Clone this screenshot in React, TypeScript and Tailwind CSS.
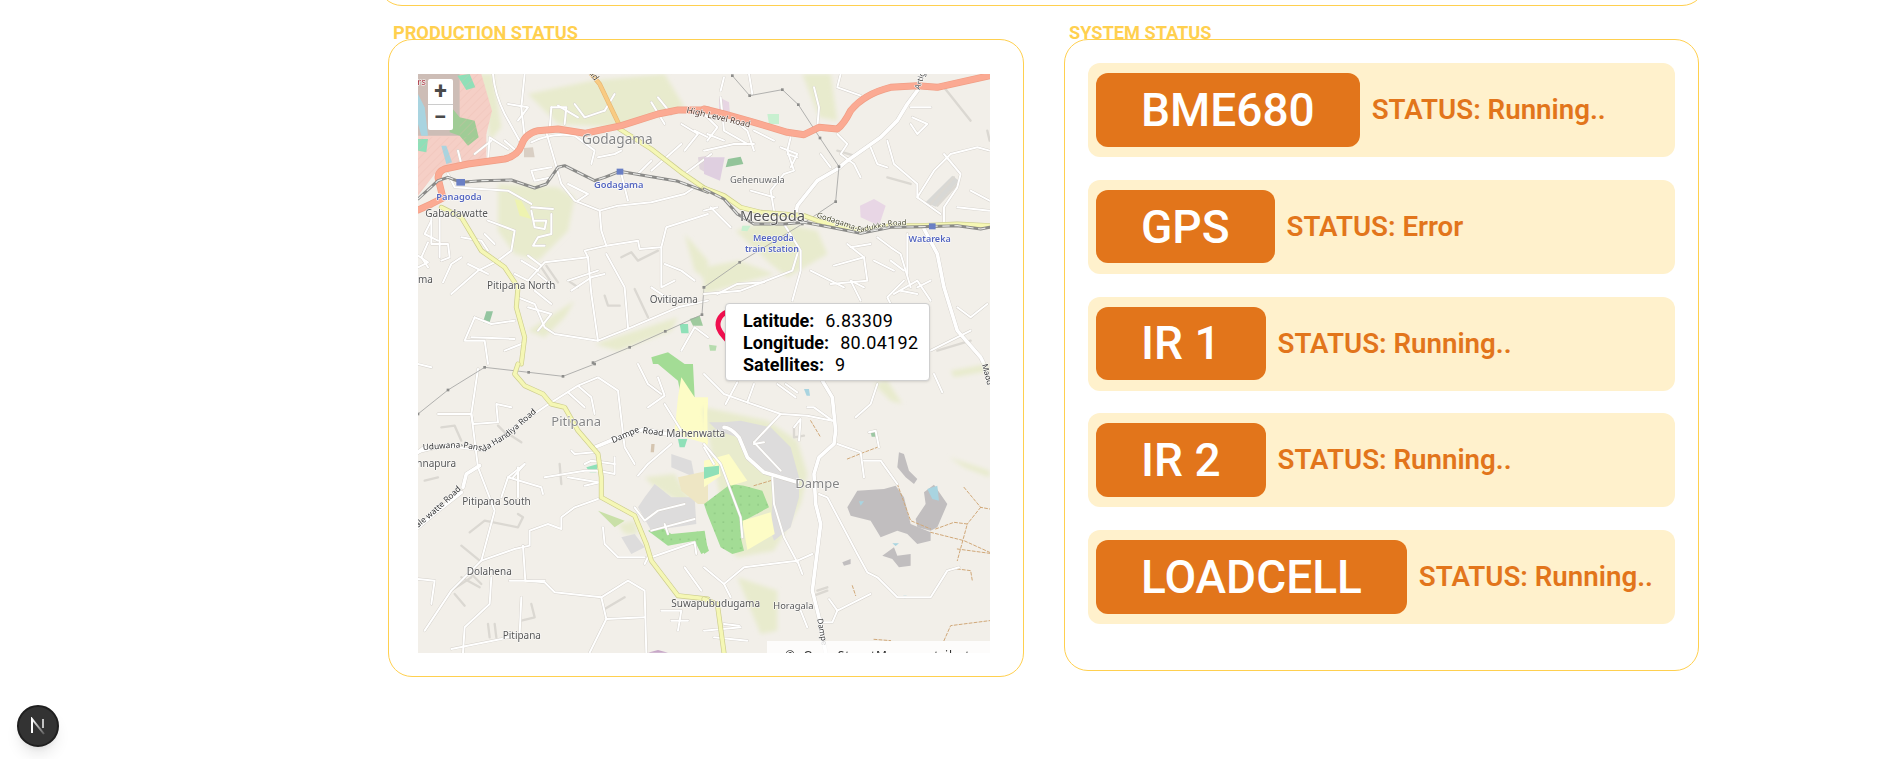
const Y = ["M70,400 L130,430 L190,530 L260,580 L300,640 L295,700 L320,790 L310,870","M605,165 L700,225 L790,295 L870,350"];

type Q = {
  t: string;
  areas: [string, string][];
  minor: string[];
  major?: string[];
  yellow?: string[];
  salmon?: string[];
  orange?: string[];
  rail?: string[];
  power?: string[];
  paths?: string[];
  tracks?: string[];
};

const PALE = "#e8ebcd";
const GREEN = "#a3dc95";
const CREAM = "#fdfcc6";
const GREY = "#dddcdc";
const ROCK = "#c1bebf";
const TEAL = "#8fe0b8";
const WATER = "#a9d4e0";

const quads: Q[] = [
  {
    t: "scale(0.3333)",
    areas: [
      [PALE, "M160,0 L225,0 L250,160 L215,200 L205,110Z"],
      [PALE, "M330,60 L520,20 L740,0 L800,100 L600,160 L420,150Z"],
      [PALE, "M240,330 L420,340 L470,370 L450,470 L360,560 L290,540 L240,470Z"],
      [PALE, "M530,810 L780,730 L760,770 L600,830Z"],
      [PALE, "M330,770 L470,680 L440,730 L380,790Z"],
      [PALE, "M800,480 L870,560 L870,620 L830,590Z"],
      ["#f5cfc6", "M0,0 L190,0 L222,110 L205,180 L205,270 L95,275 L70,280 L50,300 L0,365Z"],
      ["#cdbdb6", "M0,0 L125,0 L125,185 L0,185Z"],
      ["#a0cc96", "M100,100 L125,130 L170,140 L182,190 L150,215 L125,185 L95,175Z"],
      [TEAL, "M118,5 L155,0 L172,40 L145,48Z"],
      [WATER, "M0,60 L20,100 L30,185 L10,185 L0,150Z"],
      [TEAL, "M0,195 L30,195 L25,235 L0,230Z"],
      [WATER, "M70,215 L85,215 L102,265 L85,270Z"],
      ["#d9cfc4", "M318,222 L345,220 L350,250 L318,250Z"],
      ["#94c5a0", "M205,712 L225,712 L215,745 L195,745Z"],
      [TEAL, "M785,750 L810,750 L812,778 L790,778Z"],
      ["#9fca9e", "M815,735 L845,725 L855,755 L825,755Z"],
      [GREEN, "M700,850 L750,835 L800,870 L705,870Z"],
      ["#eef3b0", "M290,375 L310,380 L340,435 L305,425Z"],
      ["#e0d4dc", "M840,250 L870,245 L870,300 L845,285Z"],
    ],
    salmon: ["M0,408 L40,390 L75,372 L62,320 Q55,295 80,285 L150,270 L260,255 Q300,245 310,215 Q320,180 360,170 L420,165 L500,178 L610,155 L720,120 L780,108 L870,108"],
    orange: ["M520,0 L545,30 L605,155"],
    yellow: Y,
    rail: ["M0,375 L60,320 L90,310 L130,325 L190,320 L280,318 L350,342 L385,330 L420,280 L440,275 L530,320 L560,310 L605,292 L700,308 L780,322 L870,355"],
    power: ["M525,866 L635,820 L742,772 L852,722 L858,640"],
    minor: [
      "M225,0 Q230,60 260,120 L310,210","M320,0 L310,100 L320,190","M340,205 Q400,175 470,185 L530,230 L520,270",
      "M385,175 L410,260 L430,330 L470,380 L545,410 L600,395 L700,385 L800,360 L830,340",
      "M545,410 L550,470 L565,515 L660,500 L665,525 L730,520 L745,460 L870,420",
      "M565,515 L500,530 L510,550 L380,565 L330,620 L290,600","M510,550 L520,660 L540,800","M565,540 L620,640 L630,760",
      "M730,520 L730,640 L770,620","M740,570 L790,590 L830,620","M270,225 L215,190 L210,260","M260,200 L300,235",
      "M40,430 L40,510 L90,510 L95,550 L70,560","M65,430 L65,550","M30,505 L10,550 L30,580","M130,550 L100,570 L75,625",
      "M210,440 L290,470 L280,530 L240,560 L180,590 L100,660","M340,400 L405,405","M340,410 L350,460 L380,465 L385,440 L350,440",
      "M400,420 L400,480 L360,490 L345,515 L380,515","M300,670 L350,690 L380,760 L410,780 L540,800 L640,760 L780,700 L870,680",
      "M170,730 L140,800 L200,800 L210,870","M160,790 L290,795","M260,830 L310,810","M450,620 L540,590","M700,290 L790,210",
      "M610,230 L590,240 L540,250","M630,380 L610,300","M400,100 L445,100 L440,150","M720,70 L760,120","M220,200 L170,240",
      "M310,560 L360,590","M330,545 L370,575","M400,280 L340,290 L350,320 L400,310","M450,330 L510,360 L480,380","M90,300 L110,340 L270,350 L340,390",
      "M120,230 L130,270","M700,85 L740,150","M880,240 L800,300","M830,170 L870,190","M560,110 L500,130 L470,90",
      "M270,90 L330,100 L300,140","M400,100 L395,165","M420,95 L480,130","M590,60 L560,110","M790,150 L840,180 L800,230","M700,260 L660,300",
      "M40,440 L20,480 L60,500","M0,545 L30,565 L0,580","M130,490 L190,500 L210,530","M200,480 L230,510","M150,570 L210,600","M290,740 L220,750 L170,730",
      "M330,700 L400,720 L360,770","M350,650 L400,690","M360,600 L410,640","M460,650 L520,610 L560,600","M790,830 L830,760 L870,790","M700,640 L760,680",
    ],
    tracks: ["M650,645 L690,730","M610,550 L640,535 L660,560 L720,530","M560,665 L570,695 L605,695","M450,620 L480,640","M370,580 L410,640","M385,575 L420,625"],
  },
  {
    t: "translate(286,0) scale(0.3333)",
    areas: [
      [PALE, "M295,0 L380,0 L400,140 L345,130Z"],
      [PALE, "M95,470 L200,440 L340,470 L370,540 L250,610 L200,570Z"],
      [PALE, "M0,580 L105,560 L210,600 L0,660Z"],
      ["#e7d5e3", "M45,70 L75,85 L78,120 L45,115Z"],
      ["#dfcfe0", "M0,250 L62,250 L48,320 L0,300Z"],
      ["#93c49a", "M72,255 L110,248 L118,270 L65,280Z"],
      ["#c8f0d0", "M190,120 L225,120 L225,150 L195,150Z"],
      ["#e8d6e5", "M468,395 L510,375 L545,395 L525,455 L470,430Z"],
      ["#c8f0d0", "M115,455 L140,455 L130,472 L112,470Z"],
      ["#d8d8d5", "M665,385 L745,305 L765,320 L695,398Z"],
      ["#b6dcae", "M15,812 L38,815 L35,830 L18,830Z"],
    ],
    salmon: ["M0,105 L60,120 L150,145 L250,175 L300,182 L345,160 L400,165 Q420,150 440,110 Q480,60 560,40 L640,35 L700,40 L857,5"],
    yellow: ["M0,342 L60,365 L110,400 L170,415 L300,425 L340,440 L470,470 L560,455 L650,455 L760,450 L857,455"],
    rail: ["M0,345 L60,375 L100,420 L150,450 L240,450 L300,445 L380,460 L470,478 L560,460 L650,458 L760,455 L830,465 L857,460"],
    power: ["M85,5 L137,65 L235,47 L283,92 L348,192 L405,278 L395,383 L295,450 L107,565 L0,640"],
    major: ["M640,50 L610,90 L580,140 L530,190 L430,260 L400,285 L340,320 L280,395 L275,420","M660,465 L700,540 L720,640 L760,770 L830,850 L840,870"],
    minor: [
      "M260,190 L250,230 L270,290 L240,300 L200,350 L210,410","M0,230 L90,210 L150,210","M50,70 L60,170 L130,210","M135,0 L145,60",
      "M10,180 L60,200","M410,0 L400,40 L470,65","M330,40 L345,100 L340,160","M240,450 L290,530 L290,590 L265,680",
      "M0,660 L110,650 L265,590 L280,540","M400,180 L430,210 L410,240 L450,270 L470,310","M550,200 L570,270 L640,330 L640,370 L710,420",
      "M640,370 L690,290 L740,240 L820,220 L857,230","M720,240 L770,300 L760,340 L720,400 L720,450","M430,510 L480,550 L390,575",
      "M480,550 L490,620 L380,630","M520,490 L560,520 L590,540 L620,640","M600,620 L550,670 L560,690","M680,830 L800,770","M320,590 L420,640",
      "M620,100 L680,100","M625,130 L670,150 L640,180 L620,150","M40,660 L100,630 L180,625","M0,410 L40,400","M140,350 L210,370",
      "M470,680 L440,620 L480,640","M570,660 L640,620 L680,680","M60,10 L50,50","M250,240 L280,250","M610,480 L610,600",
      "M0,120 L40,160 L10,200","M80,130 L130,170 L150,230","M150,170 L210,200","M230,220 L280,240 L260,280","M500,220 L520,270 L550,280","M350,240 L380,280",
      "M440,520 L500,510","M510,560 L570,590","M560,560 L600,590","M590,650 L640,660","M640,640 L680,620","M800,350 L857,380","M760,400 L857,410",
      "M20,400 L80,460","M850,690 L800,730 L760,700",
    ],
    tracks: ["M720,40 L800,140","M550,310 L620,330","M700,830 L800,800","M850,170 L857,200","M400,230 L450,245","M680,390 L750,310","M700,395 L765,325"],
  },
  {
    t: "translate(0,290) scale(0.3333)",
    areas: [
      [PALE, "M680,340 L770,330 L830,430 L760,400 L700,360Z"],
      [PALE, "M600,480 L650,470 L660,510 L620,510Z"],
      [GREY, "M610,520 L650,510 L680,550 L640,570Z"],
      [GREY, "M680,400 L710,360 L760,400 L830,400 L835,480 L700,500 L660,430Z"],
      [GREY, "M760,270 L820,290 L830,340 L760,310Z"],
      [GREEN, "M690,500 L730,490 L760,510 L860,500 L870,560 L850,570 L830,530 L750,545 L730,530Z"],
      [GREEN, "M720,0 L825,0 L830,100 L790,100 L780,50Z"],
      [CREAM, "M790,40 L830,100 L870,100 L870,240 L800,220 L770,200 L780,100Z"],
      ["#eee6c4", "M780,340 L870,320 L870,420 L840,420 L790,380Z"],
      [TEAL, "M505,310 L540,300 L535,325 L515,325Z"],
      ["#c9e0a8", "M540,440 L620,470 L590,490 L565,465Z"],
      [TEAL, "M780,225 L808,225 L800,250 L785,250Z"],
      ["#c7a7c8", "M690,866 L720,858 L750,866Z"],
      ["#d5c5b0", "M700,240 L710,240 L708,265 L698,265Z"],
    ],
    yellow: ["M300,0 L290,30 L320,65 L375,90 L400,120 L440,130 L480,200 L540,270 L550,340 L550,400 L650,455 L685,540 L700,590 L780,695 L870,705"],
    power: ["M0,150 L90,78 L200,10 L332,25 L435,37 L530,0"],
    major: ["M135,370 L145,330 L185,305","M0,490 L60,440 L130,385","M0,265 L20,250","M530,250 L590,225 L680,195 L770,215"],
    minor: [
      "M0,265 L80,245 L200,260 L290,190 L385,125 L480,65 L540,40 L600,80 L620,250 L650,300","M60,150 L160,150 L165,180 L240,175 L235,120 L280,130",
      "M160,150 L180,310 L230,440 L190,590 L100,680 L20,800","M180,15 L160,150","M380,340 L500,320 L540,320","M320,300 L270,340 L250,400",
      "M270,340 L370,370 L375,390","M300,310 L300,400","M540,405 L470,430 L430,460 L430,495 L390,480 L335,500 L335,545 L290,555 L190,590",
      "M315,545 L322,650 L380,655 L410,685 L550,700 L630,650 L680,680 L685,866","M275,650 L380,650","M220,640 L215,720 L140,790 L135,866",
      "M310,700 L305,810 L250,825 L100,855","M565,765 L680,760","M550,700 L565,765 L515,866","M555,490 L560,540 L600,580 L680,580",
      "M690,580 L680,600","M700,580 L830,535 L835,570","M720,40 L740,95 L690,130","M660,0 L690,60 L730,90","M760,240 L690,300 L660,335",
      "M460,260 L470,270 L530,265","M450,340 L540,355","M500,365 L545,355","M590,280 L590,330 L540,320","M650,430 L680,470 L720,440 L800,420","M700,500 L830,465",
      "M740,480 L750,510","M730,740 L790,740 L780,800","M760,770 L810,770","M800,610 L850,680","M0,645 L50,650 L40,720","M0,0 L40,10",
      "M480,65 L520,100 L530,150","M450,85 L500,130","M285,340 L320,300","M500,300 L520,290 L590,300","M740,120 L790,200",
    ],
    tracks: ["M70,190 L110,185 L130,230","M130,545 L185,590","M155,505 L200,470 L300,490 L315,460 L300,450","M425,300 L430,360","M100,680 L160,640","M110,690 L140,725","M340,720 L350,760 L310,770","M210,780 L215,820","M230,780 L235,820","M560,735 L620,700","M280,215 L310,235","M240,185 L270,215","M20,350 L60,340","M130,640 L185,670","M160,630 L190,660"],
  },
  {
    t: "translate(286,290) scale(0.3333)",
    areas: [
      [PALE, "M0,130 L190,170 L280,230 L310,330 L290,420 L210,560 L100,580 L80,560 L0,150Z"],
      [PALE, "M510,60 L550,50 L595,120 L560,110Z"],
      [PALE, "M735,280 L857,320 L857,340 L780,310Z"],
      [PALE, "M740,20 L850,0 L857,20 L750,40Z"],
      [PALE, "M100,640 L220,680 L220,800 L170,810Z"],
      [GREY, "M15,175 L60,175 L110,170 L200,190 L260,250 L285,340 L285,400 L260,490 L210,530 L200,500 L210,340 L130,290 L100,220 L40,200Z"],
      [GREEN, "M0,420 L80,360 L120,365 L175,380 L195,430 L120,470 L110,520 L120,560 L85,570 L50,550 L10,450Z"],
      [CREAM, "M40,280 L75,270 L130,350 L80,365 L60,330Z"],
      [CREAM, "M115,470 L200,445 L212,510 L130,558Z"],
      [CREAM, "M0,120 L10,120 L10,250 L0,250Z"],
      [CREAM, "M0,290 L40,280 L50,335 L0,370Z"],
      [TEAL, "M0,310 L45,305 L45,330 L0,345Z"],
      [GREEN, "M0,520 L15,560 L0,570Z"],
      [ROCK, "M430,430 L460,380 L540,375 L575,365 L600,400 L620,480 L680,505 L680,530 L640,540 L610,510 L580,500 L530,520 L500,470 L440,455Z"],
      [ROCK, "M635,465 L665,420 L660,385 L690,362 L730,420 L700,490 L680,500 L640,490Z"],
      [ROCK, "M585,265 L600,270 L615,320 L640,345 L630,360 L605,340 L580,310Z"],
      [ROCK, "M535,575 L570,550 L580,575 L620,570 L620,605 L585,610 L565,585Z"],
      [ROCK, "M415,595 L440,585 L440,600 L420,605Z"],
      [WATER, "M670,375 L700,365 L705,410 L685,405Z"],
      [WATER, "M465,412 L480,412 L470,425Z"],
      [WATER, "M565,538 L585,538 L575,546Z"],
      [WATER, "M300,75 L315,75 L318,95 L308,95Z"],
      [WATER, "M598,695 L608,695 L603,705Z"],
      ["#9cc7a3", "M500,205 L515,202 L515,218 L503,218Z"],
    ],
    yellow: ["M0,705 L40,720 L60,866"],
    major: ["M355,50 L385,100 L395,200 L390,240 L345,280 L330,330 L335,420 L350,480 L340,560 L325,680 L345,760 L365,866","M60,190 Q80,190 105,220 L130,280 L180,325 L280,355"],
    paths: ["M430,285 L480,265 L520,250","M580,360 L620,470 L680,495","M680,505 L780,530 L857,565","M695,495 L750,475 L790,480 L760,590","M780,370 L830,430 L857,435","M830,430 L790,480","M760,555 L857,568","M760,615 L800,620 L805,650","M720,830 L740,785 L857,770","M445,665 L455,695","M320,170 L350,220","M150,365 L200,350","M510,826 L560,830"],
    minor: [
      "M0,240 L50,300 L110,460 L115,520","M400,240 L470,265 L480,340","M480,290 L530,290 L580,360","M345,390 L370,400 L460,570 L490,625 L520,640 L580,700 L680,700 L730,620 L765,610",
      "M230,150 L150,235","M130,115 L230,150 L310,155 L385,170","M310,130 L330,130 L385,170","M205,340 L210,420 L240,520 L280,595","M325,570 L280,590 L120,610 L60,660 L80,700",
      "M0,610 L60,660","M280,590 L295,630","M375,705 L400,740 L500,690","M400,740 L385,775 L350,775","M290,740 L310,790","M0,30 L60,90 L130,115","M520,60 L500,120 L455,160",
      "M495,205 L515,200 L525,250","M270,190 L290,165 L285,230","M690,30 L715,85","M150,60 L130,115","M100,55 L65,120","M220,60 L275,100","M245,60 L280,85",
      "M0,800 L110,790","M30,820 L130,830","M60,780 L105,785","M150,235 L230,320","M0,250 L30,300","M150,240 L180,235",
    ],
    tracks: ["M270,190 L270,220 L300,215","M330,695 L370,680","M340,680 L370,670"],
  },
];

function MapArt() {
  return (
    <svg width="572" height="579" viewBox="0 0 572 579" className="block blur-[0.5px]">
      <rect width="572" height="579" fill="#f2efe9" />
      <defs>
        <pattern id="hatch" width="18" height="18" patternUnits="userSpaceOnUse" patternTransform="rotate(-45)">
          <line x1="0" y1="0" x2="18" y2="0" stroke="#e9b7ab" strokeWidth="1.5" />
        </pattern>
        <pattern id="trees" width="26" height="26" patternUnits="userSpaceOnUse">
          <circle cx="6" cy="6" r="1.8" fill="#6fa768" />
        </pattern>
        <filter id="soft" x="-20%" y="-20%" width="140%" height="140%">
          <feGaussianBlur stdDeviation="7" />
        </filter>
      </defs>
      {quads.map((q, i) => (
        <g key={i} transform={q.t} fill="none" strokeLinecap="round" strokeLinejoin="round">
          {q.areas.map(([c, d], j) => (
            <path key={j} d={d} fill={c} filter={c === PALE ? "url(#soft)" : undefined} />
          ))}
          {i === 0 && <path d="M125,185 L205,180 L222,110 L190,0 L125,0Z M0,190 L205,190 L205,270 L95,275 L50,300 L0,365Z" fill="url(#hatch)" />}
          {i === 3 && <path d="M0,420 L80,360 L120,365 L175,380 L195,430 L120,470 L110,520 L120,560 L85,570 L50,550 L10,450Z" fill="url(#trees)" />}
          {i === 2 && <path d="M690,500 L730,490 L760,510 L860,500 L870,560 L850,570 L830,530 L750,545 L730,530Z" fill="url(#trees)" />}
          {q.tracks?.map((d, j) => <path key={j} d={d} stroke="#dbd8d2" strokeWidth="7" />)}
          {q.paths?.map((d, j) => <path key={j} d={d} stroke="#d0a878" strokeWidth="3" strokeDasharray="9 6" />)}
          {q.minor.map((d, j) => <path key={j} d={d} stroke="#d4d0ca" strokeWidth="8.5" />)}
          {q.major?.map((d, j) => <path key={j} d={d} stroke="#cfcbc5" strokeWidth="13" />)}
          {q.minor.map((d, j) => <path key={j} d={d} stroke="#ffffff" strokeWidth="6" />)}
          {q.major?.map((d, j) => <path key={j} d={d} stroke="#ffffff" strokeWidth="11" />)}
          {q.power?.map((d, j) => (
            <g key={j}>
              <path d={d} stroke="#a4a4a2" strokeWidth="2.5" />
              {d.split(/[ML ]+/).filter(Boolean).map((p, k) => {
                const [x, y] = p.split(",");
                return <rect key={k} x={Number(x) - 4} y={Number(y) - 4} width="8" height="8" fill="#8d8d8b" />;
              })}
            </g>
          ))}
          {q.orange?.map((d, j) => <path key={j} d={d} stroke="#e9b771" strokeWidth="14" />)}
          {q.orange?.map((d, j) => <path key={j} d={d} stroke="#f8cb83" strokeWidth="10" />)}
          {q.yellow?.map((d, j) => <path key={j} d={d} stroke="#cdcd8e" strokeWidth="15" />)}
          {q.yellow?.map((d, j) => <path key={j} d={d} stroke="#f5f7b5" strokeWidth="11" />)}
          {q.salmon?.map((d, j) => <path key={j} d={d} stroke="#f09e85" strokeWidth="21" />)}
          {q.salmon?.map((d, j) => <path key={j} d={d} stroke="#fbaa93" strokeWidth="17" />)}
          {q.rail?.map((d, j) => <path key={j} d={d} stroke="#8a8a88" strokeWidth="9" />)}
          {q.rail?.map((d, j) => <path key={j} d={d} stroke="#e8e8e6" strokeWidth="3.5" strokeDasharray="22 14" strokeLinecap="butt" />)}
        </g>
      ))}
      <g transform="scale(0.3333)" fontFamily="'Noto Sans',sans-serif" stroke="#ffffff" strokeWidth="3" paintOrder="stroke" strokeLinejoin="round">
        <defs>
          <path id="p-gp" d="M1195,430 L1258,450 L1328,475 L1418,455 L1510,452" />
          <path id="p-ud" d="M15,1128 L130,1120 L200,1132 L270,1090 L385,990" />
          <path id="p-wa" d="M0,1362 L60,1312 L146,1232" />
          <path id="p-da" d="M585,1108 L660,1075 L745,1088" />
        </defs>
        <rect x="115" y="315" width="26" height="20" fill="#6a7fc4" stroke="none" />
        <rect x="596" y="284" width="20" height="18" fill="#6a7fc4" stroke="none" />
        <rect x="1533" y="448" width="20" height="18" fill="#6a7fc4" stroke="none" />
        <text x="-2" y="34" fontSize="29" fill="#a8323e">rs</text>
        <text x="506" y="8" fontSize="26" fill="#5a4a30" transform="rotate(55 520 8)">ad</text>
        <text x="492" y="209" fontSize="41" fill="#858585">Godagama</text>
        <text x="55" y="378" fontSize="28" fontWeight="600" fill="#5566bf">Panagoda</text>
        <text x="528" y="343" fontSize="28" fontWeight="600" fill="#5566bf">Godagama</text>
        <text x="22" y="428" fontSize="30" fill="#555">Gabadawatte</text>
        <text x="0" y="628" fontSize="30" fill="#555">ma</text>
        <text x="207" y="646" fontSize="30" fill="#555">Pitipana North</text>
        <text x="695" y="686" fontSize="30" fill="#555">Ovitigama</text>
        <text x="804" y="116" fontSize="26" fill="#4f3a30" transform="rotate(13 804 116)">High Level Road</text>
        <text x="936" y="326" fontSize="28" fill="#666">Gehenuwala</text>
        <text x="966" y="442" fontSize="44" fill="#555">Meegoda</text>
        <text fontSize="23" fill="#4a4a30"><textPath href="#p-gp">Godagama-Padukka Road</textPath></text>
        <text x="1005" y="500" fontSize="27" fontWeight="600" fill="#5566bf">Meegoda</text>
        <text x="981" y="535" fontSize="27" fontWeight="600" fill="#5566bf">train station</text>
        <text x="1472" y="503" fontSize="27" fontWeight="600" fill="#5566bf">Watareka</text>
        <text x="1505" y="48" fontSize="24" fill="#444" transform="rotate(-72 1505 48)">Artigala</text>
        <text x="400" y="1056" fontSize="39" fill="#858585">Pitipana</text>
        <text fontSize="26" fill="#333"><textPath href="#p-da" startOffset="0">Dampe Road</textPath></text>
        <text x="745" y="1090" fontSize="30" fill="#555">Mahenwatta</text>
        <text fontSize="25" fill="#333"><textPath href="#p-ud">Uduwana-Pansala Handiya Road</textPath></text>
        <text x="-5" y="1178" fontSize="30" fill="#555">nnapura</text>
        <text fontSize="25" fill="#333"><textPath href="#p-wa">ale watte Road</textPath></text>
        <text x="133" y="1294" fontSize="30" fill="#555">Pitipana South</text>
        <text x="146" y="1502" fontSize="30" fill="#555">Dolahena</text>
        <text x="254" y="1695" fontSize="30" fill="#555">Pitipana</text>
        <text x="760" y="1598" fontSize="30" fill="#555">Suwapubudugama</text>
        <text x="1066" y="1605" fontSize="28" fill="#555">Horagala</text>
        <text x="1132" y="1242" fontSize="39" fill="#858585">Dampe</text>
        <text x="1198" y="1635" fontSize="24" fill="#333" transform="rotate(80 1198 1635)">Dampe</text>
        <text x="1692" y="872" fontSize="24" fill="#333" transform="rotate(75 1692 872)">Madd</text>
      </g>
    </svg>
  );
}

function ProductionCard() {
  return (
    <div className="w-[636px] h-[638px] rounded-3xl border border-[#ffd04f] pl-[29px] pt-[34px]">
      <div className="relative w-[572px] h-[579px] overflow-hidden">
        <MapArt />
        <div className="absolute left-[10px] top-[5px] w-[25px] rounded-[2px] bg-white">
          <div className="h-[26px] flex items-center justify-center border-b border-[#ccc] text-[#4a4a4a] text-[23px] font-bold leading-none">+</div>
          <div className="h-[25px] flex items-center justify-center text-[#4a4a4a] text-[23px] font-bold leading-none">−</div>
        </div>
        <svg className="absolute left-[296px] top-[234px]" width="36" height="42" viewBox="0 0 36 42" fill="none">
          <path d="M18 38 C12 30 4 24 4 17 A14 14 0 0 1 32 17 C32 24 24 30 18 38Z" stroke="#f0104f" strokeWidth="5" />
        </svg>
        <div className="absolute left-[307px] top-[229px] w-[205px] h-[78px] rounded-[4px] bg-white border border-[#cfcfcf] shadow-sm pl-[17px] pt-[6px] text-[18px] leading-[22px] text-black">
          <div className="flex gap-[11px]"><span className="font-bold">Latitude:</span><span className="tracking-[0.35px]">6.83309</span></div>
          <div className="flex gap-[11px]"><span className="font-bold">Longitude:</span><span className="tracking-[0.35px]">80.04192</span></div>
          <div className="flex gap-[11px]"><span className="font-bold">Satellites:</span><span className="tracking-[0.35px]">9</span></div>
        </div>
        <div className="absolute left-[349px] right-0 top-[567px] h-[20px] bg-white/80 blur-[0.3px] pl-[18px] pt-[7px] text-[12px] leading-[16px] tracking-[0.8px] text-[#333] font-['Noto_Sans',sans-serif] whitespace-nowrap">
          ©&nbsp;&nbsp;OpenStreetMap&nbsp;&nbsp;contributors
        </div>
      </div>
    </div>
  );
}

const rows = [
  ["BME680", "STATUS: Running.."],
  ["GPS", "STATUS: Error"],
  ["IR 1", "STATUS: Running.."],
  ["IR 2", "STATUS: Running.."],
  ["LOADCELL", "STATUS: Running.."],
];

function SystemCard() {
  return (
    <div className="w-[635px] h-[632px] rounded-3xl border border-[#ffd04f] px-[23px] pt-[23px] flex flex-col gap-[22.75px]">
      {rows.map(([name, status]) => (
        <div key={name} className="h-[94px] rounded-xl bg-[#fff1cc] pl-2 pt-[10px] flex items-start gap-[12px]">
          <div className="h-[73.5px] rounded-xl bg-[#e2751b] px-[45px] flex items-center text-white text-[46px] font-medium leading-none">{name}</div>
          <div className="self-center -mt-[10px] text-[#e2751b] text-[27.7px] font-semibold leading-none">{status}</div>
        </div>
      ))}
    </div>
  );
}

function Title({ children, ml }: { children: string; ml: string }) {
  return <div className={`h-[17px] leading-[21px] text-[18.2px] font-bold text-[#ffd04f] whitespace-nowrap ${ml}`}>{children}</div>;
}

export default function App() {
  return (
    <div className="relative h-screen overflow-hidden bg-white font-['Roboto',sans-serif]">
      <div className="-mt-[100px] ml-[378px] w-[1328px] h-[106px] rounded-3xl border border-[#ffd04f]" />
      <div className="ml-[388px] mt-[16px] flex gap-[40px] items-start">
        <div>
          <Title ml="ml-[5px]">PRODUCTION STATUS</Title>
          <ProductionCard />
        </div>
        <div>
          <Title ml="ml-[5px]">SYSTEM STATUS</Title>
          <SystemCard />
        </div>
      </div>
      <div className="absolute left-[17px] top-[705px] w-[42px] h-[42px] rounded-full bg-[#333] border-2 border-[#1f1f1f] shadow-lg flex items-center justify-center">
        <svg width="18" height="18" viewBox="0 0 18 18" fill="none">
          <defs>
            <linearGradient id="n1" x1="0" y1="0" x2="1" y2="1">
              <stop offset="0" stopColor="#fff" />
              <stop offset="1" stopColor="#fff" stopOpacity="0.2" />
            </linearGradient>
          </defs>
          <path d="M3 16 V2 L15 17" stroke="url(#n1)" strokeWidth="2" />
          <path d="M14 2 V11" stroke="#fff" strokeOpacity="0.7" strokeWidth="2" />
          <path d="M3 2 V16" stroke="#fff" strokeWidth="2" />
        </svg>
      </div>
    </div>
  );
}
